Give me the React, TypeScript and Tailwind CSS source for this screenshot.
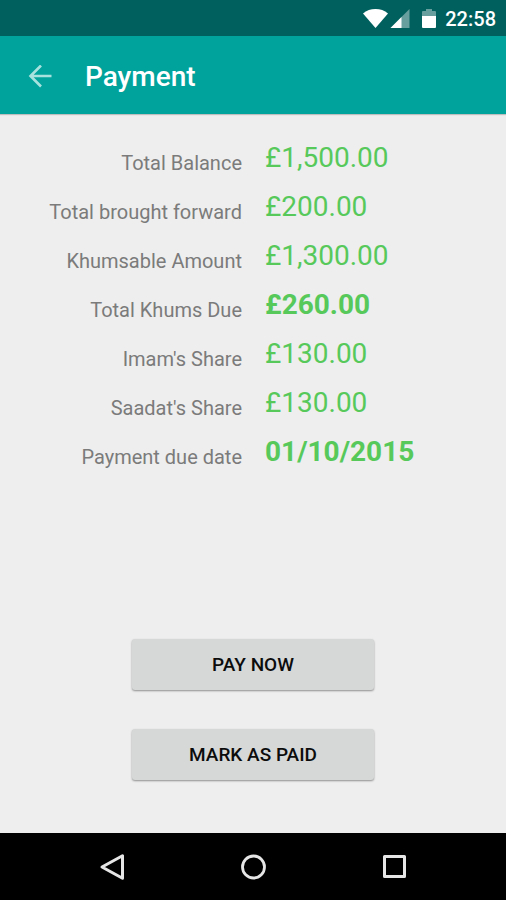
import { clsx } from 'clsx';

const rows = [
  { label: 'Total Balance', value: '£1,500.00' },
  { label: 'Total brought forward', value: '£200.00' },
  { label: 'Khumsable Amount', value: '£1,300.00' },
  { label: 'Total Khums Due', value: '£260.00', strong: true },
  { label: "Imam's Share", value: '£130.00' },
  { label: "Saadat's Share", value: '£130.00' },
  { label: 'Payment due date', value: '01/10/2015', strong: true },
];

function StatusBar() {
  return (
    <div className="flex h-9 items-center justify-end bg-[#00605e] pt-px pr-[10px] text-white">
      {/* Wifi */}
      <svg className="mr-[2px] h-5 w-[26px]" viewBox="0 0 26 20" fill="currentColor">
        <path d="M13.5 19 1 4.5C4.5 1.4 8.8 0 13.5 0S22.5 1.4 26 4.5Z" />
      </svg>
      {/* Signal */}
      <svg className="mr-3 h-5 w-5" viewBox="0 0 20 20" fill="currentColor">
        <path d="M0.5 19 19.5 0V19Z" opacity="0.4" />
        <path d="M0.5 19 11.5 8V19Z" />
      </svg>
      {/* Battery */}
      <svg className="mr-[9px] h-5 w-[14px]" viewBox="0 0 14 20" fill="currentColor">
        <path d="M0 7V3Q0 2 1 2H4V0H10V2H13Q14 2 14 3V7Z" opacity="0.4" />
        <path d="M0 7H14V18Q14 19 13 19H1Q0 19 0 18Z" />
      </svg>
      <span className="text-xl leading-6 font-medium">22:58</span>
    </div>
  );
}

function AppBar() {
  return (
    <header className="flex h-[78px] items-center bg-[#00a39c] pt-[3px] pl-7 text-white shadow-[0_1px_1px_#00000033]">
      <button type="button" aria-label="Back" className="mr-[33px] text-[#a8e2df]">
        <svg className="h-6 w-6" viewBox="0 0 24 24" fill="none" stroke="currentColor" strokeWidth="2.6">
          <path d="M23.5 11H2.5M13 0.5 2.5 11 13 21.5" />
        </svg>
      </button>
      <h1 className="text-[28px] leading-8 font-medium">Payment</h1>
    </header>
  );
}

function ActionButton({ children }: { children: string }) {
  return (
    <button
      type="button"
      className="h-[51px] w-[242px] rounded-[3px] bg-[#d6d8d7] text-[19px] leading-6 font-medium text-[#0c0c0c] shadow-[0_1px_2px_#00000066]"
    >
      {children}
    </button>
  );
}

function NavBar() {
  return (
    <nav className="grid h-[67px] grid-cols-3 items-center justify-items-center bg-black px-[8%] text-[#e6e6e6]">
      <button type="button" aria-label="Back">
        <svg className="h-7 w-7" viewBox="0 0 28 28" fill="none" stroke="currentColor" strokeWidth="3" strokeLinejoin="round">
          <path d="M25.5 2.8V25.2L5 14Z" />
        </svg>
      </button>
      <button type="button" aria-label="Home">
        <svg className="h-7 w-7" viewBox="0 0 28 28" fill="none" stroke="currentColor" strokeWidth="2.8">
          <circle cx="14.5" cy="14" r="11" />
        </svg>
      </button>
      <button type="button" aria-label="Recent apps">
        <svg className="h-7 w-7" viewBox="0 0 28 28" fill="none" stroke="currentColor" strokeWidth="3" strokeLinejoin="round">
          <rect x="3.5" y="3.5" width="20" height="20" />
        </svg>
      </button>
    </nav>
  );
}

export default function App() {
  return (
    <div className="flex min-h-screen flex-col bg-[#eeeeee] font-['Roboto',sans-serif]">
      <StatusBar />
      <AppBar />

      <main className="flex flex-1 flex-col justify-between pt-[26px] pb-[53px]">
        <dl>
          {rows.map((row) => (
            <div key={row.label} className="grid h-[49px] grid-cols-2 gap-x-[22px]">
              <dt className="pt-[11px] text-right text-xl leading-6 text-[#7b7b7b]">{row.label}</dt>
              <dd className={clsx('pl-px text-[28px] leading-9 text-[#57c95b]', row.strong && 'font-bold')}>
                {row.value}
              </dd>
            </div>
          ))}
        </dl>

        <div className="flex flex-col items-center gap-[39px]">
          <ActionButton>PAY NOW</ActionButton>
          <ActionButton>MARK AS PAID</ActionButton>
        </div>
      </main>

      <NavBar />
    </div>
  );
}
